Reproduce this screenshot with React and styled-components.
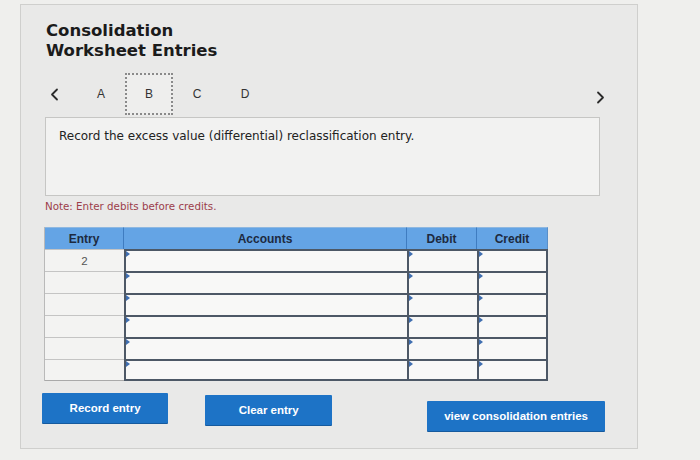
import styled, { createGlobalStyle } from 'styled-components';

const GlobalStyle = createGlobalStyle`
  html, body {
    margin: 0;
    background: #efefed;
  }
  body {
    font-family: "DejaVu Sans", Verdana, sans-serif;
  }
`;

const tabs = ['A', 'B', 'C', 'D'];
const rows = ['2', '', '', '', '', ''];

const Chevron = ({ dir }) => (
  <svg width="9" height="13" viewBox="0 0 9 13">
    <path
      d={dir === 'left' ? 'M7 1.5 L2 6.5 L7 11.5' : 'M2 1.5 L7 6.5 L2 11.5'}
      fill="none"
      stroke="#2b2b2b"
      strokeWidth="1.8"
      strokeLinecap="round"
      strokeLinejoin="round"
    />
  </svg>
);

export default function App() {
  return (
    <Page>
      <GlobalStyle />
      <Panel>
        <Title>
          Consolidation
          <br />
          Worksheet Entries
        </Title>

        <TabsRow>
          <NavBtn>
            <Chevron dir="left" />
          </NavBtn>
          {tabs.map((t) => (
            <Tab key={t} $active={t === 'B'}>
              {t}
            </Tab>
          ))}
          <NavBtn $right>
            <Chevron dir="right" />
          </NavBtn>
        </TabsRow>

        <Instruction>
          Record the excess value (differential) reclassification entry.
        </Instruction>

        <Note>Note: Enter debits before credits.</Note>

        <Table>
          <HeadCell>Entry</HeadCell>
          <HeadCell>Accounts</HeadCell>
          <HeadCell>Debit</HeadCell>
          <HeadCell $last>Credit</HeadCell>
          {rows.map((r, i) => (
            <Row key={i}>
              <EntryCell $lastRow={i === rows.length - 1}>{r}</EntryCell>
              <InputCell $lastRow={i === rows.length - 1} />
              <InputCell $lastRow={i === rows.length - 1} />
              <InputCell $lastRow={i === rows.length - 1} $last />
            </Row>
          ))}
        </Table>

        <Actions>
          <ActionBtn $w={127}>Record entry</ActionBtn>
          <ActionBtn $w={128} $gap={37} $drop={2}>
            Clear entry
          </ActionBtn>
          <ActionBtn $w={179} $gap={95} $drop={8}>
            view consolidation entries
          </ActionBtn>
        </Actions>
      </Panel>
    </Page>
  );
}

const Page = styled.div`
  width: 700px;
  height: 460px;
  box-sizing: border-box;
  padding: 4px 0 0 20px;
`;

const Panel = styled.div`
  width: 618px;
  height: 445px;
  box-sizing: border-box;
  border: 1px solid #cfcfcd;
  background: #e9e9e8;
  padding: 16px 32px 0 25px;
  display: flex;
  flex-direction: column;
`;

const Title = styled.h2`
  margin: 0;
  font-size: 16.5px;
  line-height: 20px;
  font-weight: bold;
  color: #1b1b1b;
`;

const TabsRow = styled.div`
  display: flex;
  align-items: center;
  height: 42px;
  margin-top: 12px;
`;

const NavBtn = styled.div`
  display: flex;
  align-items: center;
  width: 31px;
  padding-left: ${(p) => (p.$right ? '0' : '4px')};
  margin-left: ${(p) => (p.$right ? 'auto' : '0')};
  justify-content: ${(p) => (p.$right ? 'flex-end' : 'flex-start')};
  padding-top: ${(p) => (p.$right ? '7px' : '0')};
  box-sizing: border-box;
`;

const Tab = styled.div`
  width: 48px;
  height: 42px;
  box-sizing: border-box;
  display: flex;
  align-items: center;
  justify-content: center;
  font-family: "Liberation Sans", Arial, sans-serif;
  font-size: 12px;
  color: #333;
  border: 2px dotted ${(p) => (p.$active ? '#8a8a8a' : 'transparent')};
  background: ${(p) => (p.$active ? '#eeeeed' : 'transparent')};
`;

const Instruction = styled.div`
  width: 555px;
  height: 79px;
  box-sizing: border-box;
  margin: 2px 0 0 -1px;
  padding: 11px 13px;
  border: 1px solid #c6c6c4;
  background: #f2f2f1;
  font-size: 12px;
  line-height: 15px;
  color: #222;
`;

const Note = styled.div`
  margin-top: 4px;
  margin-left: -1px;
  font-size: 10.3px;
  line-height: 12px;
  color: #9c3d4a;
`;

const Table = styled.div`
  display: grid;
  grid-template-columns: 79px 283px 70px 71px;
  grid-auto-rows: 22px;
  width: 503px;
  margin: 15px 0 0 -2px;
  border-left: 1px solid #b9b9b9;
`;

const HeadCell = styled.div`
  height: 21px;
  display: flex;
  align-items: center;
  justify-content: center;
  background: #64a4e5;
  border-top: 1px solid #8fb8e0;
  border-right: 1px solid ${(p) => (p.$last ? '#5a8fc8' : '#3f7cc0')};
  font-family: "Liberation Sans", Arial, sans-serif;
  font-weight: bold;
  font-size: 12px;
  color: #1d2a40;
`;

const Row = styled.div`
  display: contents;
`;

const EntryCell = styled.div`
  background: #f3f3f2;
  border-top: 1px solid #c4c4c4;
  border-bottom: ${(p) => (p.$lastRow ? '1px solid #a9a9a9' : 'none')};
  display: flex;
  align-items: center;
  justify-content: center;
  font-family: "Liberation Sans", Arial, sans-serif;
  font-size: 11.5px;
  color: #555;
`;

const InputCell = styled.div`
  position: relative;
  background: #f8f8f7;
  border-top: 2px solid #4d5866;
  border-left: 2px solid #4d5866;
  border-right: ${(p) => (p.$last ? '2px solid #4d5866' : 'none')};
  border-bottom: ${(p) => (p.$lastRow ? '2px solid #4d5866' : 'none')};

  &::before {
    content: '';
    position: absolute;
    left: 0;
    top: 0;
    border-left: 4px solid #3f6eb0;
    border-top: 3px solid transparent;
    border-bottom: 3px solid transparent;
  }
`;

const Actions = styled.div`
  display: flex;
  align-items: flex-start;
  margin: 12px 0 0 -4px;
`;

const ActionBtn = styled.button`
  width: ${(p) => p.$w}px;
  height: 30px;
  margin-left: ${(p) => p.$gap || 0}px;
  margin-top: ${(p) => p.$drop || 0}px;
  border: none;
  border-radius: 1px;
  background: #1d73c6;
  box-shadow: 0 1px 0 #155a9e;
  color: #fff;
  font-family: "Liberation Sans", Arial, sans-serif;
  font-weight: bold;
  font-size: 11.5px;
  padding: 0;
  cursor: pointer;
`;
